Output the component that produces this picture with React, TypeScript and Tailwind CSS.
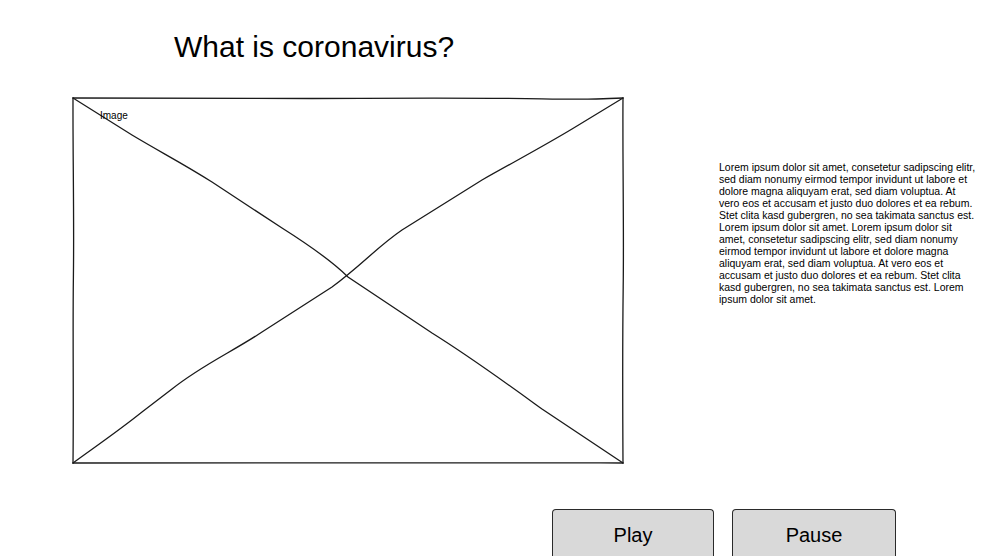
import React from "react";

function SketchBox() {
  return (
    <div className="relative w-[553px] h-[368px] shrink-0">
      <svg width="553" height="368" viewBox="0 0 553 368" className="absolute inset-0" fill="none" stroke="#1a1a1a" strokeWidth="1.3" strokeLinecap="round">
        <path d="M1 1 C 80 0.5, 160 2, 240 1.5 S 400 0.5, 470 1.8 S 530 1.2, 551 1" />
        <path d="M551 1 C 550.5 60, 552 130, 551.2 190 S 550.6 300, 551 366" />
        <path d="M551 366 C 470 365.2, 390 366.5, 300 365.8 S 120 366.4, 1 366" />
        <path d="M1 366 C 1.8 300, 0.6 240, 1.4 180 S 0.8 60, 1 1" />
        <path d="M1 1 L 60 38 C 90 56, 110 66, 140 85 L 210 131 C 240 150, 260 164, 276 180 L 360 236 C 400 261, 430 283, 470 312 L 551 366" />
        <path d="M551 1 L 500 32 C 470 50, 440 66, 410 83 L 330 133 C 305 150, 290 168, 260 190 L 190 235 C 160 255, 130 268, 100 292 L 70 315 C 45 335, 20 352, 1 366" />
      </svg>
      <div className="absolute left-[28px] top-[13px] text-[10px] leading-[12px] text-black" style={{ fontFamily: '"Liberation Sans", Arial, sans-serif' }}>
        Image
      </div>
    </div>
  );
}

function SketchButton({ label, width }: { label: string; width: number }) {
  return (
    <div
      className="h-[50px] shrink-0 bg-[#d9d9d9] border border-b-0 border-[#2a2a2a] rounded-t-[4px] flex items-start justify-center pt-[13px] text-[20px] leading-[24px] text-black"
      style={{ width }}
    >
      {label}
    </div>
  );
}

export default function App() {
  return (
    <div
      className="w-[997px] h-[556px] bg-white overflow-hidden flex flex-col"
      style={{ fontFamily: '"Liberation Sans", Arial, sans-serif' }}
    >
      <div className="shrink-0 pt-[28px] pl-[174px] text-[30px] leading-[38px] text-black h-[97px]">
        What is coronavirus?
      </div>
      <div className="shrink-0 flex flex-row pl-[72px]">
        <SketchBox />
        <div className="ml-[94px] mt-[64px] w-[257px] text-[10.5px] leading-[12px] text-black">
          Lorem ipsum dolor sit amet, consetetur sadipscing elitr, sed diam nonumy eirmod tempor invidunt ut labore et dolore magna aliquyam erat, sed diam voluptua. At vero eos et accusam et justo duo dolores et ea rebum. Stet clita kasd gubergren, no sea takimata sanctus est. Lorem ipsum dolor sit amet. Lorem ipsum dolor sit amet, consetetur sadipscing elitr, sed diam nonumy eirmod tempor invidunt ut labore et dolore magna aliquyam erat, sed diam voluptua. At vero eos et accusam et justo duo dolores et ea rebum. Stet clita kasd gubergren, no sea takimata sanctus est. Lorem ipsum dolor sit amet.
        </div>
      </div>
      <div className="shrink-0 flex flex-row gap-[18px] pl-[552px] mt-[44px]">
        <SketchButton label="Play" width={162} />
        <SketchButton label="Pause" width={164} />
      </div>
    </div>
  );
}
